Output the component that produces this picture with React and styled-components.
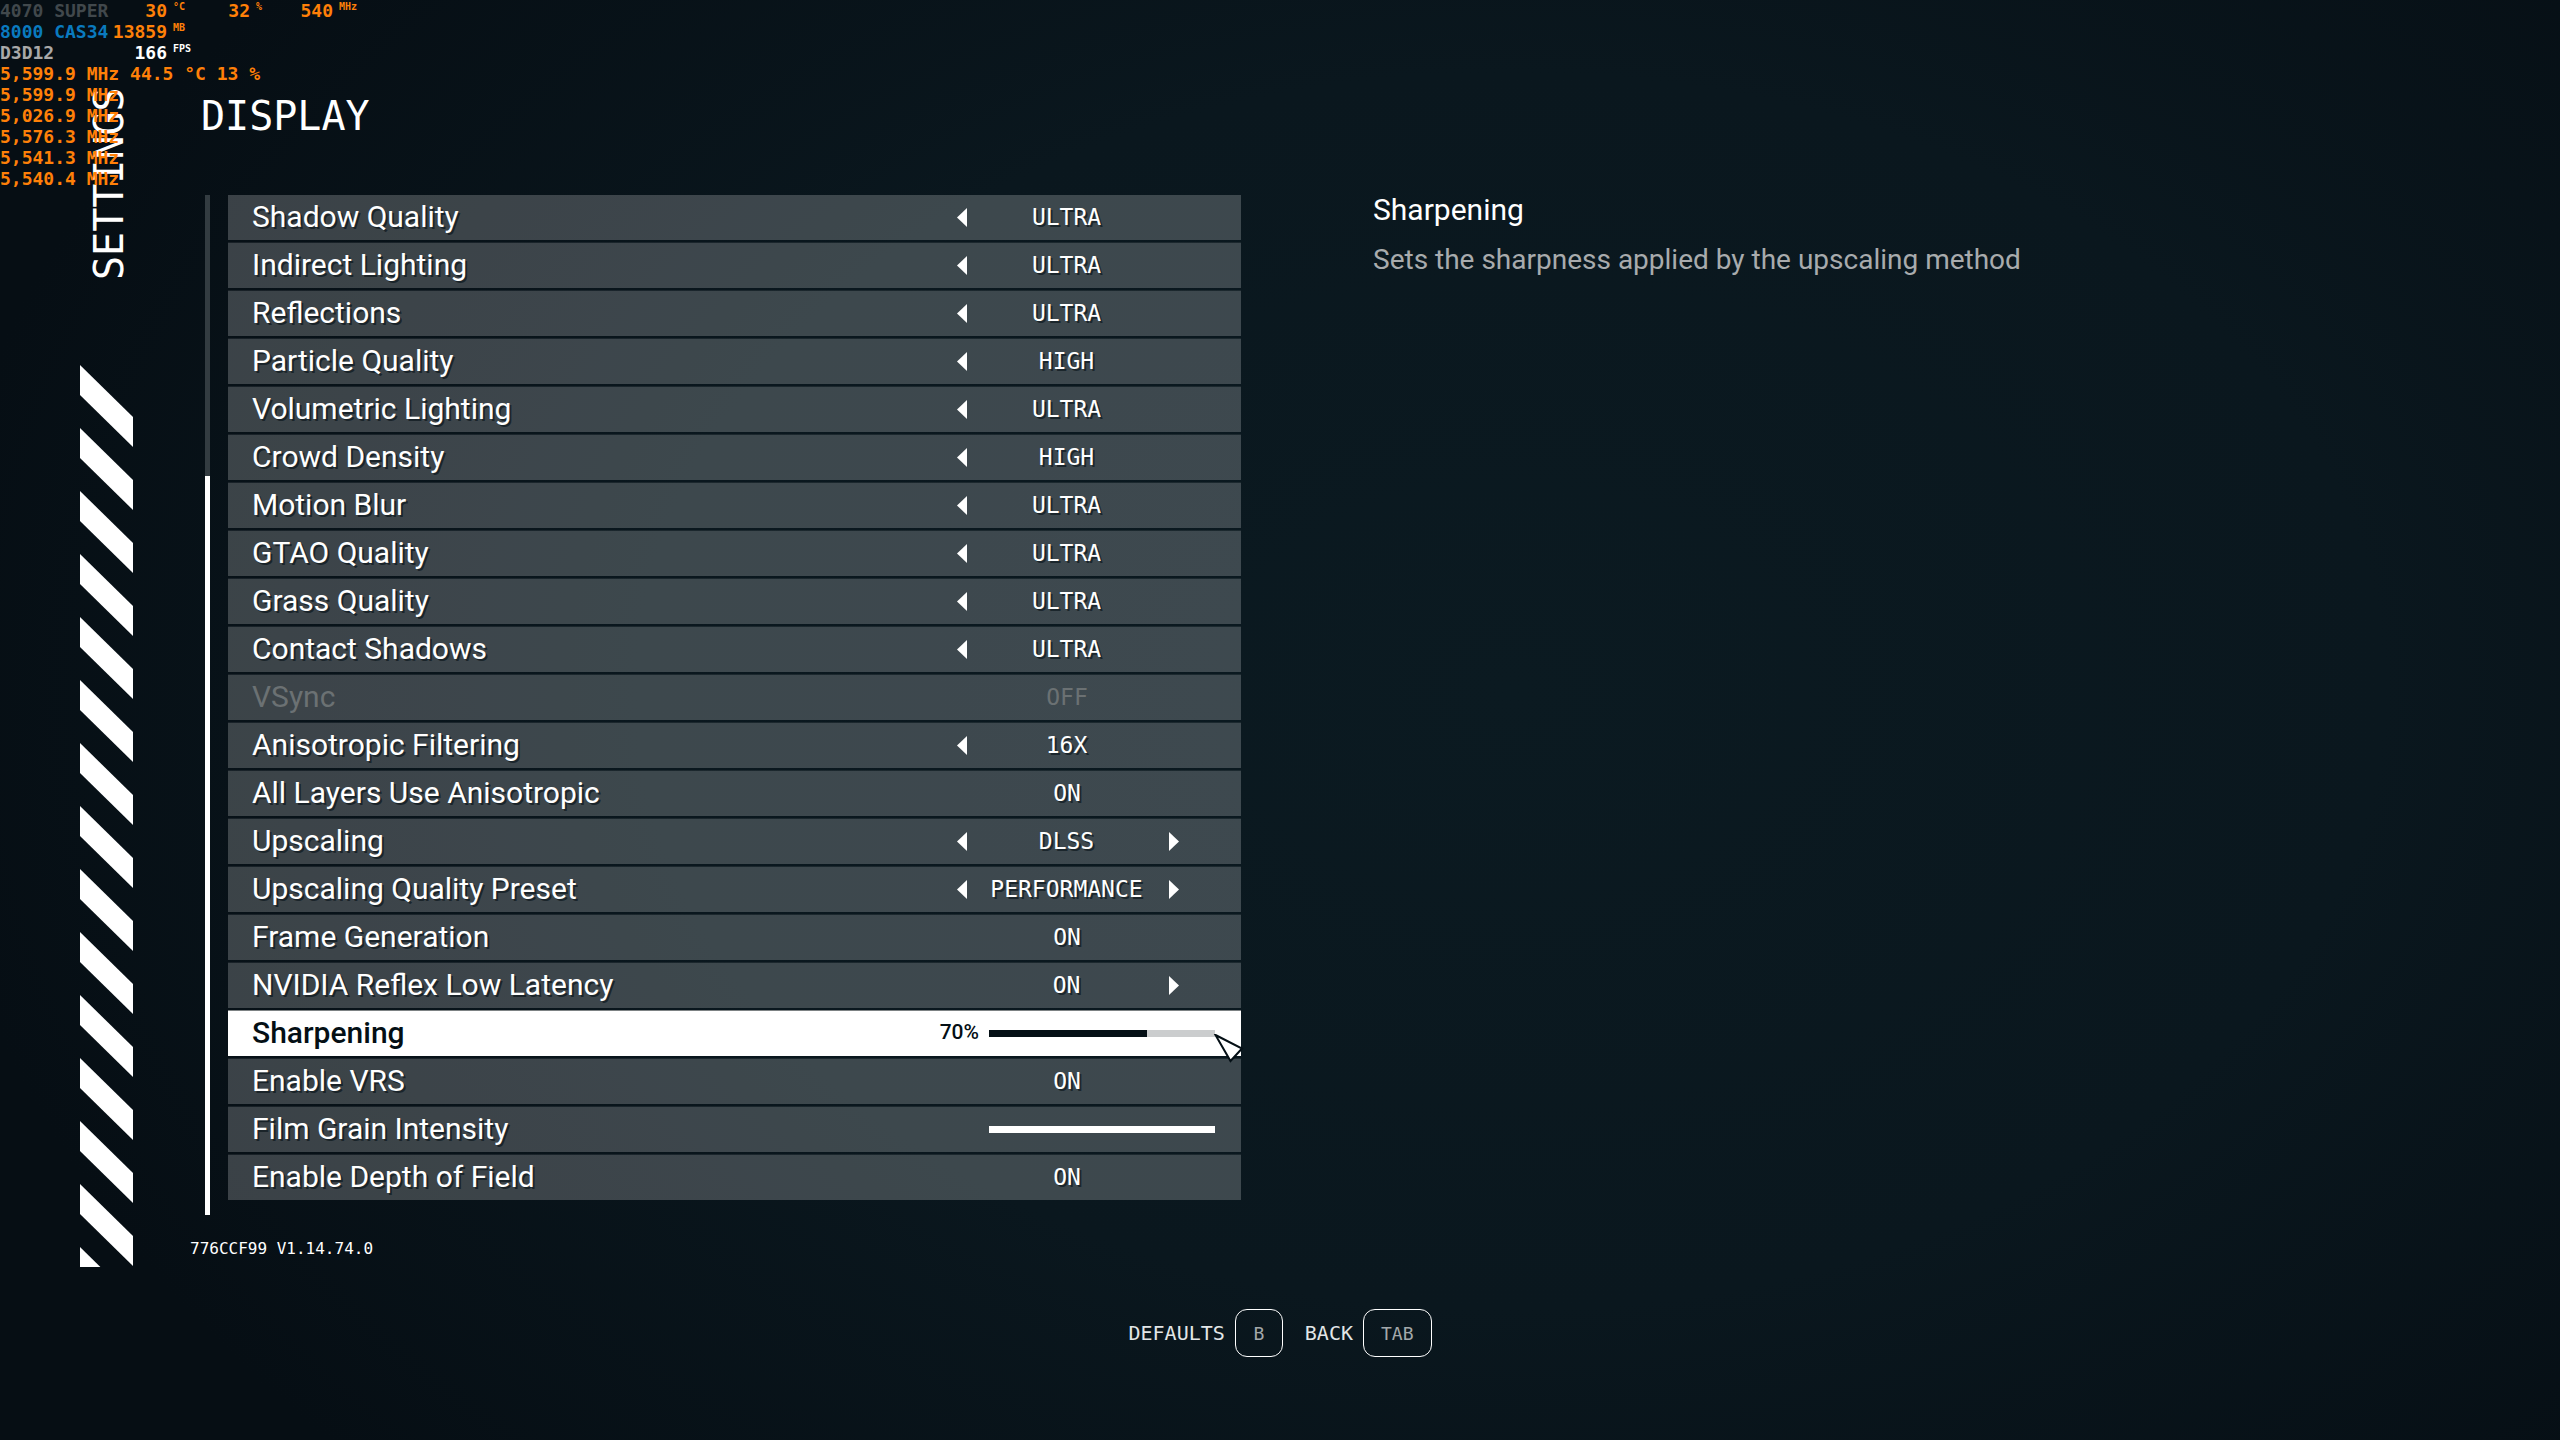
import React, { useState } from "react"
import styled, { createGlobalStyle, css } from "styled-components"

const sans = `Roboto, "Liberation Sans", sans-serif`
const mono = `"DejaVu Sans Mono", "Liberation Mono", monospace`
const ink = "#040f15"

const GlobalStyle = createGlobalStyle`
  *, *::before, *::after {
    box-sizing: border-box;
  }
  body {
    margin: 0;
    background: #060e14;
  }
  h1, h2, p, ul {
    margin: 0;
    padding: 0;
    font-weight: 400;
  }
  button, select, input {
    margin: 0;
    padding: 0;
    border: 0;
    background: none;
    color: inherit;
    font: inherit;
    text-shadow: inherit;
  }
`

const Screen = styled.div`
  position: relative;
  min-height: 100vh;
  display: flex;
  flex-direction: column;
  color: #fff;
  font-family: ${sans};
  background: radial-gradient(
    ellipse 62% 78% at 59% 48%,
    #0b1a21 0%,
    #0a171e 55%,
    #060e14 100%
  );
`

const Columns = styled.div`
  display: grid;
  grid-template-columns: 190px minmax(0, 1fr);
`

const Sidebar = styled.aside`
  display: flex;
  flex-direction: column;
  padding: 87px 0 0 80px;
`

const SidebarTitle = styled.p`
  width: 59px;
  height: 193px;
  margin-bottom: 85px;
  writing-mode: vertical-rl;
  transform: rotate(180deg);
  font-family: ${mono};
  font-size: 40px;
  line-height: 59px;
`

const Stripes = styled.svg`
  display: block;
  width: 53px;
  height: 902px;
`

const Main = styled.main`
  display: flex;
  flex-direction: column;
  padding-top: 92px;
`

const PageTitle = styled.h1`
  padding-left: 11px;
  margin-bottom: 54px;
  font-family: ${mono};
  font-size: 40px;
  line-height: 48px;
`

const Body = styled.div`
  display: grid;
  grid-template-columns: 1036fr 1187fr;
  gap: 132px;
  padding-left: 15px;
`

const Scroller = styled.div`
  display: flex;
  gap: 18px;
`

const Track = styled.div`
  display: flex;
  flex-direction: column;
  justify-content: flex-end;
  width: 5px;
  margin-top: 1px;
  background: #333c41;
`

const Thumb = styled.div`
  height: ${props => (props.$visible / props.$total) * 100}%;
  background: #fff;
`

const Options = styled.ul`
  flex: 1;
  display: flex;
  flex-direction: column;
  gap: 2px;
  padding-bottom: 15px;
  list-style: none;
`

const Row = styled.li`
  display: flex;
  align-items: center;
  height: 46px;
  padding: 0 26px 0 24px;
  border-top: 1px solid rgba(255, 255, 255, 0.07);
  background: rgba(255, 255, 255, 0.21);
  background-clip: padding-box;
  text-shadow: 2px 2px 0 rgba(4, 15, 21, 0.6);
  &:first-child {
    border-top-color: transparent;
  }
  ${props =>
    props.$disabled &&
    css`
      color: #6b7173;
      text-shadow: none;
    `}
  ${props =>
    props.$selected &&
    css`
      color: ${ink};
      background-color: #fff;
      border-top-color: #7d8284;
      text-shadow: none;
      font-weight: 500;
    `}
`

const Label = styled.label`
  flex: 1;
  padding-bottom: 2px;
  font-size: 30px;
  line-height: 34px;
`

const Control = styled.div`
  display: flex;
  align-items: center;
  justify-content: center;
  width: 294px;
  font-family: ${mono};
  font-size: 23px;
  line-height: 28px;
`

const Stepper = styled.div`
  display: grid;
  grid-template-columns: 10px 1fr 10px;
  align-items: center;
  width: 222px;
`

const Arrow = styled.button`
  display: flex;
  visibility: ${props => (props.$shown ? "visible" : "hidden")};
`

const Value = styled.output`
  padding: 0 3px 2px 0;
  text-align: center;
`

const Toggle = styled.button`
  width: 222px;
  padding: 0 2px 2px 0;
  text-align: center;
`

const SliderBox = styled.div`
  position: relative;
  flex: 1;
  display: flex;
  align-items: center;
  justify-content: flex-end;
  gap: 10px;
`

const Percent = styled.output`
  font-family: ${sans};
  font-size: 21px;
  line-height: 24px;
  padding-bottom: 4px;
`

const Range = styled.input`
  appearance: none;
  width: 226px;
  height: 7px;
  background: linear-gradient(
    to right,
    currentColor ${props => props.value}%,
    #cbcdce ${props => props.value}%
  );
  &::-webkit-slider-thumb {
    appearance: none;
    width: 1px;
    height: 7px;
  }
`

const Pointer = styled.svg`
  position: absolute;
  z-index: 1;
  top: 50%;
  left: calc(100% - 4px);
  width: 36px;
  height: 36px;
  pointer-events: none;
`

const Version = styled.p`
  margin-top: 24px;
  font-family: ${mono};
  font-size: 16px;
  line-height: 20px;
`

const Description = styled.section`
  font-size: 30px;
  line-height: 32px;
  h2 {
    font-size: inherit;
    margin-bottom: 18px;
  }
  p {
    color: #a8abad;
    font-size: 28px;
  }
`

const Hints = styled.footer`
  display: flex;
  justify-content: center;
  gap: 22px;
  margin-top: 42px;
`

const Hint = styled.button`
  display: flex;
  align-items: center;
  gap: 10px;
  color: #e2e6e7;
  font-family: ${mono};
  font-size: 20px;
`

const Key = styled.kbd`
  display: flex;
  align-items: center;
  justify-content: center;
  min-width: 48px;
  height: 48px;
  padding: 0 17px;
  border: 1px solid #fff;
  border-radius: 12px;
  color: #a3a8aa;
  font-family: ${mono};
  font-size: 18px;
`

const Monitor = styled.div`
  position: absolute;
  z-index: 2;
  top: 0;
  left: 0;
  color: #ff8008;
  font-family: ${mono};
  font-size: 18px;
  font-weight: 700;
  line-height: 21px;
  white-space: pre;
`

const MonitorLine = styled.div`
  display: flex;
  height: 21px;
`

const MonitorName = styled.span`
  width: 112px;
  color: ${props => props.$color};
`

const Reading = styled.span`
  display: grid;
  grid-template-columns: 55px 22px;
  column-gap: 6px;
  color: ${props => props.$color};
  text-align: right;
  small {
    font-size: 10px;
    line-height: 14px;
    text-align: left;
  }
`

const sensors = [
  {
    name: "4070 SUPER",
    color: "#41484c",
    readings: [["30", "°C"], ["32", "%"], ["540", "MHz"]],
  },
  { name: "8000 CAS34", color: "#0a7abf", readings: [["13859", "MB"]] },
  {
    name: "D3D12",
    color: "#a9a9a9",
    readings: [["166", "FPS"]],
    readingColor: "#fff",
  },
]

const clocks = [
  "5,599.9 MHz 44.5 °C 13 %",
  "5,599.9 MHz",
  "5,026.9 MHz",
  "5,576.3 MHz",
  "5,541.3 MHz",
  "5,540.4 MHz",
]

const options = [
  { label: "Shadow Quality", type: "stepper", value: "ULTRA", prev: true },
  { label: "Indirect Lighting", type: "stepper", value: "ULTRA", prev: true },
  { label: "Reflections", type: "stepper", value: "ULTRA", prev: true },
  { label: "Particle Quality", type: "stepper", value: "HIGH", prev: true },
  { label: "Volumetric Lighting", type: "stepper", value: "ULTRA", prev: true },
  { label: "Crowd Density", type: "stepper", value: "HIGH", prev: true },
  { label: "Motion Blur", type: "stepper", value: "ULTRA", prev: true },
  { label: "GTAO Quality", type: "stepper", value: "ULTRA", prev: true },
  { label: "Grass Quality", type: "stepper", value: "ULTRA", prev: true },
  { label: "Contact Shadows", type: "stepper", value: "ULTRA", prev: true },
  { label: "VSync", type: "toggle", value: "OFF", disabled: true },
  { label: "Anisotropic Filtering", type: "stepper", value: "16X", prev: true },
  { label: "All Layers Use Anisotropic", type: "toggle", value: "ON" },
  { label: "Upscaling", type: "stepper", value: "DLSS", prev: true, next: true },
  {
    label: "Upscaling Quality Preset",
    type: "stepper",
    value: "PERFORMANCE",
    prev: true,
    next: true,
  },
  { label: "Frame Generation", type: "toggle", value: "ON" },
  { label: "NVIDIA Reflex Low Latency", type: "stepper", value: "ON", next: true },
  { label: "Sharpening", type: "slider", value: 70, selected: true },
  { label: "Enable VRS", type: "toggle", value: "ON" },
  { label: "Film Grain Intensity", type: "slider", value: 100 },
  { label: "Enable Depth of Field", type: "toggle", value: "ON" },
]

const ArrowIcon = ({ right }) => (
  <svg width="10" height="19" viewBox="0 0 10 19" fill="#fff">
    <path d={right ? "M0 0L10 9.5L0 19Z" : "M10 0L0 9.5L10 19Z"} />
  </svg>
)

const StepperControl = ({ id, option }) => (
  <Stepper>
    <Arrow $shown={option.prev} aria-label={`Previous ${option.label}`}>
      <ArrowIcon />
    </Arrow>
    <Value id={id}>{option.value}</Value>
    <Arrow $shown={option.next} aria-label={`Next ${option.label}`}>
      <ArrowIcon right />
    </Arrow>
  </Stepper>
)

const ToggleControl = ({ id, option }) => {
  const [on, setOn] = useState(option.value === "ON")
  return (
    <Toggle
      id={id}
      role="switch"
      aria-checked={on}
      disabled={option.disabled}
      onClick={() => setOn(!on)}
    >
      {on ? "ON" : "OFF"}
    </Toggle>
  )
}

const SliderControl = ({ id, option }) => {
  const [value, setValue] = useState(option.value)
  return (
    <SliderBox>
      {option.selected && <Percent htmlFor={id}>{value}%</Percent>}
      <Range
        id={id}
        type="range"
        min="0"
        max="100"
        value={value}
        onChange={e => setValue(Number(e.target.value))}
      />
      {option.selected && (
        <Pointer viewBox="-4 0 36 36">
          <path
            d="M0.500 1L27 14.500L15.500 27Z"
            fill="#fff"
            stroke={ink}
            strokeWidth="2"
          />
        </Pointer>
      )}
    </SliderBox>
  )
}

const controls = {
  stepper: StepperControl,
  toggle: ToggleControl,
  slider: SliderControl,
}

const OptionRow = ({ option, id }) => {
  const OptionControl = controls[option.type]
  return (
    <Row $selected={option.selected} $disabled={option.disabled}>
      <Label htmlFor={id}>{option.label}</Label>
      <Control>
        <OptionControl id={id} option={option} />
      </Control>
    </Row>
  )
}

const HazardStripes = () => (
  <Stripes viewBox="0 0 53 902" fill="#fff" aria-hidden="true">
    {Array.from({ length: 15 }, (_, i) => (
      <path key={i} d={`M0 ${i * 63}l53 52v30l-53 -52z`} />
    ))}
  </Stripes>
)

const HardwareMonitor = () => (
  <Monitor>
    {sensors.map(sensor => (
      <MonitorLine key={sensor.name}>
        <MonitorName $color={sensor.color}>{sensor.name}</MonitorName>
        {sensor.readings.map(([value, unit]) => (
          <Reading key={unit} $color={sensor.readingColor}>
            {value}
            <small>{unit}</small>
          </Reading>
        ))}
      </MonitorLine>
    ))}
    {clocks.map((clock, i) => (
      <MonitorLine key={i}>{clock}</MonitorLine>
    ))}
  </Monitor>
)

const App = () => {
  return (
    <>
      <GlobalStyle />
      <Screen>
        <HardwareMonitor />
        <Columns>
          <Sidebar>
            <SidebarTitle>SETTINGS</SidebarTitle>
            <HazardStripes />
          </Sidebar>
          <Main>
            <PageTitle>DISPLAY</PageTitle>
            <Body>
              <Scroller>
                <Track>
                  <Thumb $visible={options.length} $total={29} />
                </Track>
                <Options>
                  {options.map((option, i) => (
                    <OptionRow key={option.label} id={`option-${i}`} option={option} />
                  ))}
                </Options>
              </Scroller>
              <Description>
                <h2>Sharpening</h2>
                <p>Sets the sharpness applied by the upscaling method</p>
              </Description>
            </Body>
            <Version>776CCF99 V1.14.74.0</Version>
          </Main>
        </Columns>
        <Hints>
          <Hint>
            DEFAULTS <Key>B</Key>
          </Hint>
          <Hint>
            BACK <Key>TAB</Key>
          </Hint>
        </Hints>
      </Screen>
    </>
  )
}

export default App
